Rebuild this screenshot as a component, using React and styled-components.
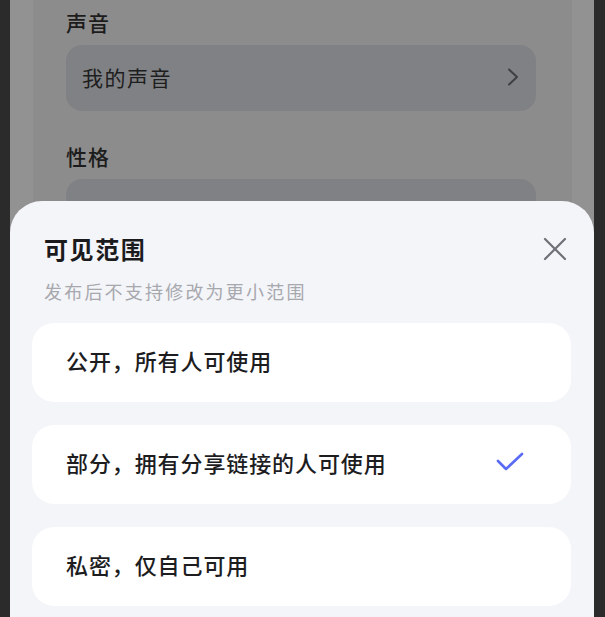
import React from "react";
import styled, { createGlobalStyle } from "styled-components";

const GlobalStyle = createGlobalStyle`
  *, *::before, *::after {
    box-sizing: border-box;
  }
  html, body {
    margin: 0;
    padding: 0;
    background: #2d2d2d;
  }
  body {
    font-family: "Noto Sans CJK SC", "Noto Sans", sans-serif;
    -webkit-font-smoothing: antialiased;
  }
`;

const Frame = styled.div`
  display: flex;
  width: 605px;
  height: 617px;
  overflow: hidden;
  background: #2d2d2d;
`;

const Edge = styled.div`
  flex: 0 0 ${(p) => p.$w}px;
  background: #2b2b2b;
`;

const Screen = styled.div`
  position: relative;
  flex: 1;
  display: flex;
  padding: 0 22px 0 23px;
  background: #929292;
  overflow: hidden;
`;

// the page behind the dimmed overlay
const Page = styled.div`
  flex: 1;
  display: flex;
  flex-direction: column;
  padding: 0 36px 0 33px;
  background: #8c8c8c;
`;

const FieldLabel = styled.div`
  font-size: 21px;
  line-height: 30px;
  font-weight: 500;
  letter-spacing: 1px;
  color: #1c1c1c;
  margin-top: ${(p) => p.$top}px;
`;

const FieldBox = styled.div`
  display: flex;
  align-items: center;
  justify-content: space-between;
  height: 66px;
  margin-top: 8px;
  padding: 0 16px 2px;
  border-radius: 16px;
  background: #808184;
  font-size: 21px;
  letter-spacing: 1.5px;
  color: #1e1e1e;
`;

const Sheet = styled.div`
  position: absolute;
  left: 0;
  right: 0;
  top: 201px;
  bottom: -40px;
  display: flex;
  flex-direction: column;
  padding: 0 23px 0 22px;
  background: #f4f5f9;
  border-radius: 32px 32px 0 0;
`;

const Header = styled.div`
  display: flex;
  align-items: center;
  justify-content: space-between;
  padding: 32px 4px 0 12px;
`;

const Title = styled.div`
  font-size: 24px;
  line-height: 32px;
  font-weight: 700;
  letter-spacing: 1.6px;
  color: #1b1b1d;
`;

const CloseButton = styled.button`
  display: flex;
  padding: 0;
  border: 0;
  background: none;
  color: #707178;
`;

const Subtitle = styled.div`
  padding-left: 12px;
  margin-top: 14px;
  font-size: 18px;
  line-height: 24px;
  letter-spacing: 2.2px;
  color: #a7a8ae;
`;

const Options = styled.div`
  display: flex;
  flex-direction: column;
  gap: 23px;
  margin-top: 20px;
`;

const Option = styled.div`
  display: flex;
  align-items: center;
  justify-content: space-between;
  height: 79px;
  padding: 0 47px 5px 34px;
  border-radius: 22px;
  background: #ffffff;
  font-size: 22px;
  font-weight: 500;
  letter-spacing: 0.9px;
  color: #1d1d1f;
`;

const Chevron = () => (
  <svg width="14" height="20" viewBox="0 0 14 20" fill="none">
    <path d="M3 2.5l8 7.5-8 7.5" stroke="#3f4044" strokeWidth="2" strokeLinecap="round" strokeLinejoin="round" />
  </svg>
);

const CloseIcon = () => (
  <svg width="24" height="24" viewBox="0 0 24 24" fill="none">
    <path d="M2 2l20 20M22 2L2 22" stroke="currentColor" strokeWidth="2.2" strokeLinecap="round" />
  </svg>
);

const CheckIcon = () => (
  <svg width="28" height="20" viewBox="0 0 28 20" fill="none">
    <path d="M2 9l8 8L26 2" stroke="#5a6bf5" strokeWidth="2.6" strokeLinecap="round" strokeLinejoin="round" />
  </svg>
);

const options = [
  { label: "公开，所有人可使用", selected: false },
  { label: "部分，拥有分享链接的人可使用", selected: true },
  { label: "私密，仅自己可用", selected: false },
];

export default function App() {
  return (
    <>
      <GlobalStyle />
      <Frame>
        <Edge $w={10} />
        <Screen>
          <Page>
            <FieldLabel $top={7}>声音</FieldLabel>
            <FieldBox>
              我的声音
              <Chevron />
            </FieldBox>
            <FieldLabel $top={30}>性格</FieldLabel>
            <FieldBox />
          </Page>

          <Sheet>
            <Header>
              <Title>可见范围</Title>
              <CloseButton aria-label="关闭">
                <CloseIcon />
              </CloseButton>
            </Header>
            <Subtitle>发布后不支持修改为更小范围</Subtitle>
            <Options>
              {options.map((o) => (
                <Option key={o.label}>
                  {o.label}
                  {o.selected && <CheckIcon />}
                </Option>
              ))}
            </Options>
          </Sheet>
        </Screen>
        <Edge $w={11} />
      </Frame>
    </>
  );
}
